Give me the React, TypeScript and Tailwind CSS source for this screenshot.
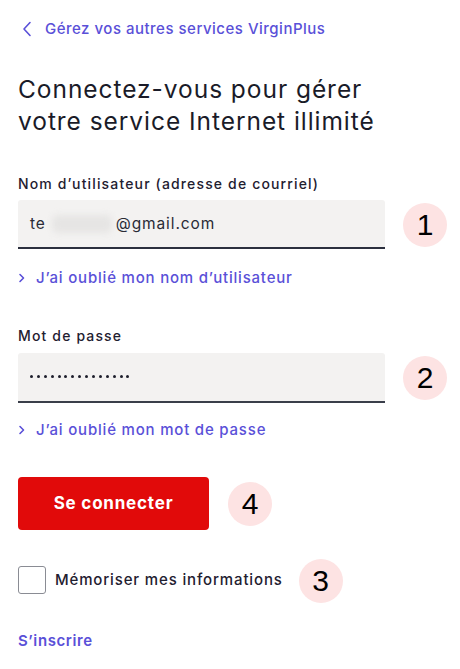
import React from "react";

const font = { fontFamily: '"Inter", "Noto Sans", sans-serif' };

function Badge({ n }: { n: string }) {
  return (
    <div
      className="flex h-[44px] w-[44px] shrink-0 items-center justify-center rounded-full bg-[#fde3e3] text-[30px] leading-none text-black"
      style={{ fontFamily: '"Liberation Sans", Arial, sans-serif' }}
    >
      {n}
    </div>
  );
}

function Chevron() {
  return (
    <svg width="8" height="10" viewBox="0 0 8 10" className="shrink-0">
      <path d="M2 1.5 L5.5 5 L2 8.5" fill="none" stroke="#5a50d8" strokeWidth="1.6" strokeLinecap="round" strokeLinejoin="round" />
    </svg>
  );
}

export default function App() {
  return (
    <div className="min-h-[669px] w-[460px] overflow-hidden bg-white text-[#1d1e2c]" style={font}>
      <div className="flex flex-col pl-[18px] pr-[10px]">
        <a className="mt-[20px] flex h-[18px] items-center gap-[13px] text-[15px] font-medium tracking-[0.5px] text-[#5a50d8]">
          <svg width="10" height="16" viewBox="0 0 10 16" className="ml-[4px] shrink-0">
            <path d="M8 1.5 L2 8 L8 14.5" fill="none" stroke="#5a50d8" strokeWidth="1.6" strokeLinecap="round" strokeLinejoin="round" />
          </svg>
          <span>Gérez vos autres services VirginPlus</span>
        </a>

        <h1 className="mt-[35px] text-[24.5px] font-normal leading-[32px] tracking-[0.95px] text-[#1a1b28]">
          Connectez-vous pour gérer
          <br />
          votre service Internet illimité
        </h1>

        <label className="mt-[37px] text-[14px] font-medium leading-[20px] tracking-[1.15px] text-[#1f2030]">
          Nom d’utilisateur (adresse de courriel)
        </label>
        <div className="mt-[6px] flex items-center gap-[18px]">
          <div className="flex h-[49px] w-[367px] shrink-0 items-center rounded-t-[3px] border-b-2 border-[#2b2f3e] bg-[#f3f2f1] pl-[12px] text-[15.5px] tracking-[0.9px] text-[#2a2b36]">
            <span>te</span>
            <span className="ml-[6px] h-[18px] w-[60px] rounded-[6px] bg-[#e6e5e4] blur-[3px]"></span>
            <span className="ml-[4px]">@gmail.com</span>
          </div>
          <Badge n="1" />
        </div>
        <a className="mt-[18px] flex items-center gap-[10px] text-[15px] font-medium tracking-[0.8px] text-[#5a50d8]">
          <Chevron />
          <span>J’ai oublié mon nom d’utilisateur</span>
        </a>

        <label className="mt-[36px] text-[14px] font-medium leading-[20px] tracking-[1.15px] text-[#1f2030]">Mot de passe</label>
        <div className="mt-[7px] flex items-center gap-[18px]">
          <div className="flex h-[50px] w-[367px] shrink-0 items-center rounded-t-[3px] border-b-2 border-[#3a3e4a] bg-[#f3f2f1] pl-[12px]">
            <div className="flex gap-[3.9px]">
              {Array.from({ length: 15 }).map((_, i) => (
                <span key={i} className="h-[3px] w-[3px] rounded-full bg-[#1d1e2c]"></span>
              ))}
            </div>
          </div>
          <Badge n="2" />
        </div>
        <a className="mt-[16px] flex items-center gap-[10px] text-[15px] font-medium tracking-[0.8px] text-[#5a50d8]">
          <Chevron />
          <span>J’ai oublié mon mot de passe</span>
        </a>

        <div className="mt-[36px] flex items-center gap-[19px]">
          <button className="flex h-[53px] w-[191px] shrink-0 items-center justify-center rounded-[4px] bg-[#e10a0a] text-[17px] font-bold tracking-[0.8px] text-white">
            Se connecter
          </button>
          <Badge n="4" />
        </div>

        <div className="mt-[27px] flex items-center">
          <span className="h-[28px] w-[28px] shrink-0 rounded-[3px] border border-[#8a8c94] bg-white"></span>
          <span className="ml-[9px] text-[15px] font-medium tracking-[0.85px] text-[#1f2030]">Mémoriser mes informations</span>
          <div className="ml-[16px] mt-[2px]">
            <Badge n="3" />
          </div>
        </div>

        <a className="mt-[27px] text-[15px] font-semibold tracking-[0.6px] text-[#5a50d8]">S’inscrire</a>
      </div>
    </div>
  );
}
